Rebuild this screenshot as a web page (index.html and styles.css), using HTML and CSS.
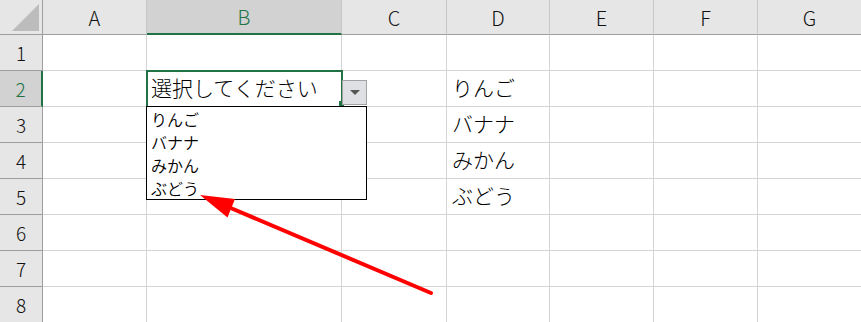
FILE: index.html
```html
<!DOCTYPE html>
<html lang="ja">

<head>
  <meta charset="UTF-8">
  <title>入力規則 ドロップダウン</title>
  <link rel="stylesheet" href="styles.css">
</head>

<body>
  <div class="sheet">
    <div class="grid">
      <!-- 列見出し -->
      <div class="corner"><span class="corner-mark"></span></div>
      <div class="col-head">A</div>
      <div class="col-head active">B</div>
      <div class="col-head">C</div>
      <div class="col-head">D</div>
      <div class="col-head">E</div>
      <div class="col-head">F</div>
      <div class="col-head">G</div>

      <div class="row-head">1</div>
      <div class="cell"></div><div class="cell"></div><div class="cell"></div><div class="cell"></div>
      <div class="cell"></div><div class="cell"></div><div class="cell"></div>

      <div class="row-head active">2</div>
      <div class="cell"></div>
      <div class="cell selected">
        選択してください
        <span class="fill-handle"></span>
        <span class="dd-btn"><span class="dd-tri"></span></span>
        <ul class="dd-list">
          <li>りんご</li>
          <li>バナナ</li>
          <li>みかん</li>
          <li>ぶどう</li>
        </ul>
      </div>
      <div class="cell"></div><div class="cell">りんご</div>
      <div class="cell"></div><div class="cell"></div><div class="cell"></div>

      <div class="row-head">3</div>
      <div class="cell"></div><div class="cell"></div><div class="cell"></div><div class="cell">バナナ</div>
      <div class="cell"></div><div class="cell"></div><div class="cell"></div>

      <div class="row-head">4</div>
      <div class="cell"></div><div class="cell"></div><div class="cell"></div><div class="cell">みかん</div>
      <div class="cell"></div><div class="cell"></div><div class="cell"></div>

      <div class="row-head">5</div>
      <div class="cell"></div><div class="cell"></div><div class="cell"></div><div class="cell">ぶどう</div>
      <div class="cell"></div><div class="cell"></div><div class="cell"></div>

      <div class="row-head">6</div>
      <div class="cell"></div><div class="cell"></div><div class="cell"></div><div class="cell"></div>
      <div class="cell"></div><div class="cell"></div><div class="cell"></div>

      <div class="row-head">7</div>
      <div class="cell"></div><div class="cell"></div><div class="cell"></div><div class="cell"></div>
      <div class="cell"></div><div class="cell"></div><div class="cell"></div>

      <div class="row-head">8</div>
      <div class="cell"></div><div class="cell"></div><div class="cell"></div><div class="cell"></div>
      <div class="cell"></div><div class="cell"></div><div class="cell"></div>
    </div>

    <!-- 注目用の赤い矢印 -->
    <svg class="arrow" width="861" height="322" viewBox="0 0 861 322">
      <line x1="431" y1="293" x2="226" y2="206" stroke="#ff0000" stroke-width="4" stroke-linecap="round" />
      <polygon points="200,195 227.5,217.5 235,199" fill="#ff0000" />
    </svg>
  </div>
</body>

</html>
```

FILE: styles.css
```css
body {
  margin: 0;
  font-family: "Noto Sans CJK JP", "Liberation Sans", sans-serif;
  background: #fff;
  overflow: hidden;
}

.sheet {
  position: relative;
  width: 861px;
  height: 322px;
  overflow: hidden;
}

.grid {
  display: grid;
  grid-template-columns: 43px 104px 195px 105px 103px 104px 104px 104px;
  grid-template-rows: 35px repeat(8, 36px);
}

.grid > div {
  box-sizing: border-box;
}

.corner {
  position: relative;
  background: #e6e6e6;
  border-right: 1px solid #9e9e9e;
  border-bottom: 1px solid #9e9e9e;
}

.corner-mark {
  position: absolute;
  left: 12px;
  top: 4px;
  width: 27px;
  height: 27px;
  background: #bcbcbc;
  clip-path: polygon(100% 0, 100% 100%, 0 100%);
}

.col-head {
  display: flex;
  align-items: center;
  justify-content: center;
  background: #e6e6e6;
  border-right: 1px solid #c6c6c6;
  border-bottom: 1px solid #9e9e9e;
  color: #111;
  font-size: 20px;
  font-weight: 300;
}

.col-head.active {
  background: #d2d2d2;
  border-bottom: 2px solid #217346;
  color: #217346;
}

.row-head {
  display: flex;
  align-items: center;
  justify-content: center;
  background: #e6e6e6;
  border-right: 1px solid #9e9e9e;
  border-bottom: 1px solid #9e9e9e;
  color: #111;
  font-size: 19px;
  font-weight: 300;
}

.row-head.active {
  background: #d2d2d2;
  border-right: 2px solid #217346;
  color: #217346;
}

.cell {
  display: flex;
  align-items: center;
  padding: 0 5px 3px;
  border-right: 1px solid #d4d4d4;
  border-bottom: 1px solid #d4d4d4;
  color: #000;
  font-size: 21px;
  font-weight: 300;
  white-space: nowrap;
}

.cell.selected {
  position: relative;
  z-index: 2;
  padding-left: 4px;
  outline: 2px solid #217346;
  outline-offset: -1px;
}

.fill-handle {
  position: absolute;
  right: -3px;
  bottom: 0;
  width: 5px;
  height: 5px;
  background: #217346;
}

.dd-btn {
  position: absolute;
  left: 195px;
  top: 9px;
  width: 25px;
  height: 25px;
  box-sizing: border-box;
  display: flex;
  align-items: center;
  justify-content: center;
  background: #dfe0e3;
  border: 1px solid #a2a2a2;
}

.dd-tri {
  width: 0;
  height: 0;
  border-left: 5px solid transparent;
  border-right: 5px solid transparent;
  border-top: 5px solid #555;
}

.dd-list {
  position: absolute;
  left: -1px;
  top: 35px;
  width: 221px;
  height: 94px;
  box-sizing: border-box;
  margin: 0;
  padding: 1px 4px;
  list-style: none;
  background: #fff;
  border: 1px solid #000;
  font-size: 16px;
  font-weight: 350;
  line-height: 23px;
  color: #000;
}

.arrow {
  position: absolute;
  left: 0;
  top: 0;
  z-index: 3;
  pointer-events: none;
}
```
